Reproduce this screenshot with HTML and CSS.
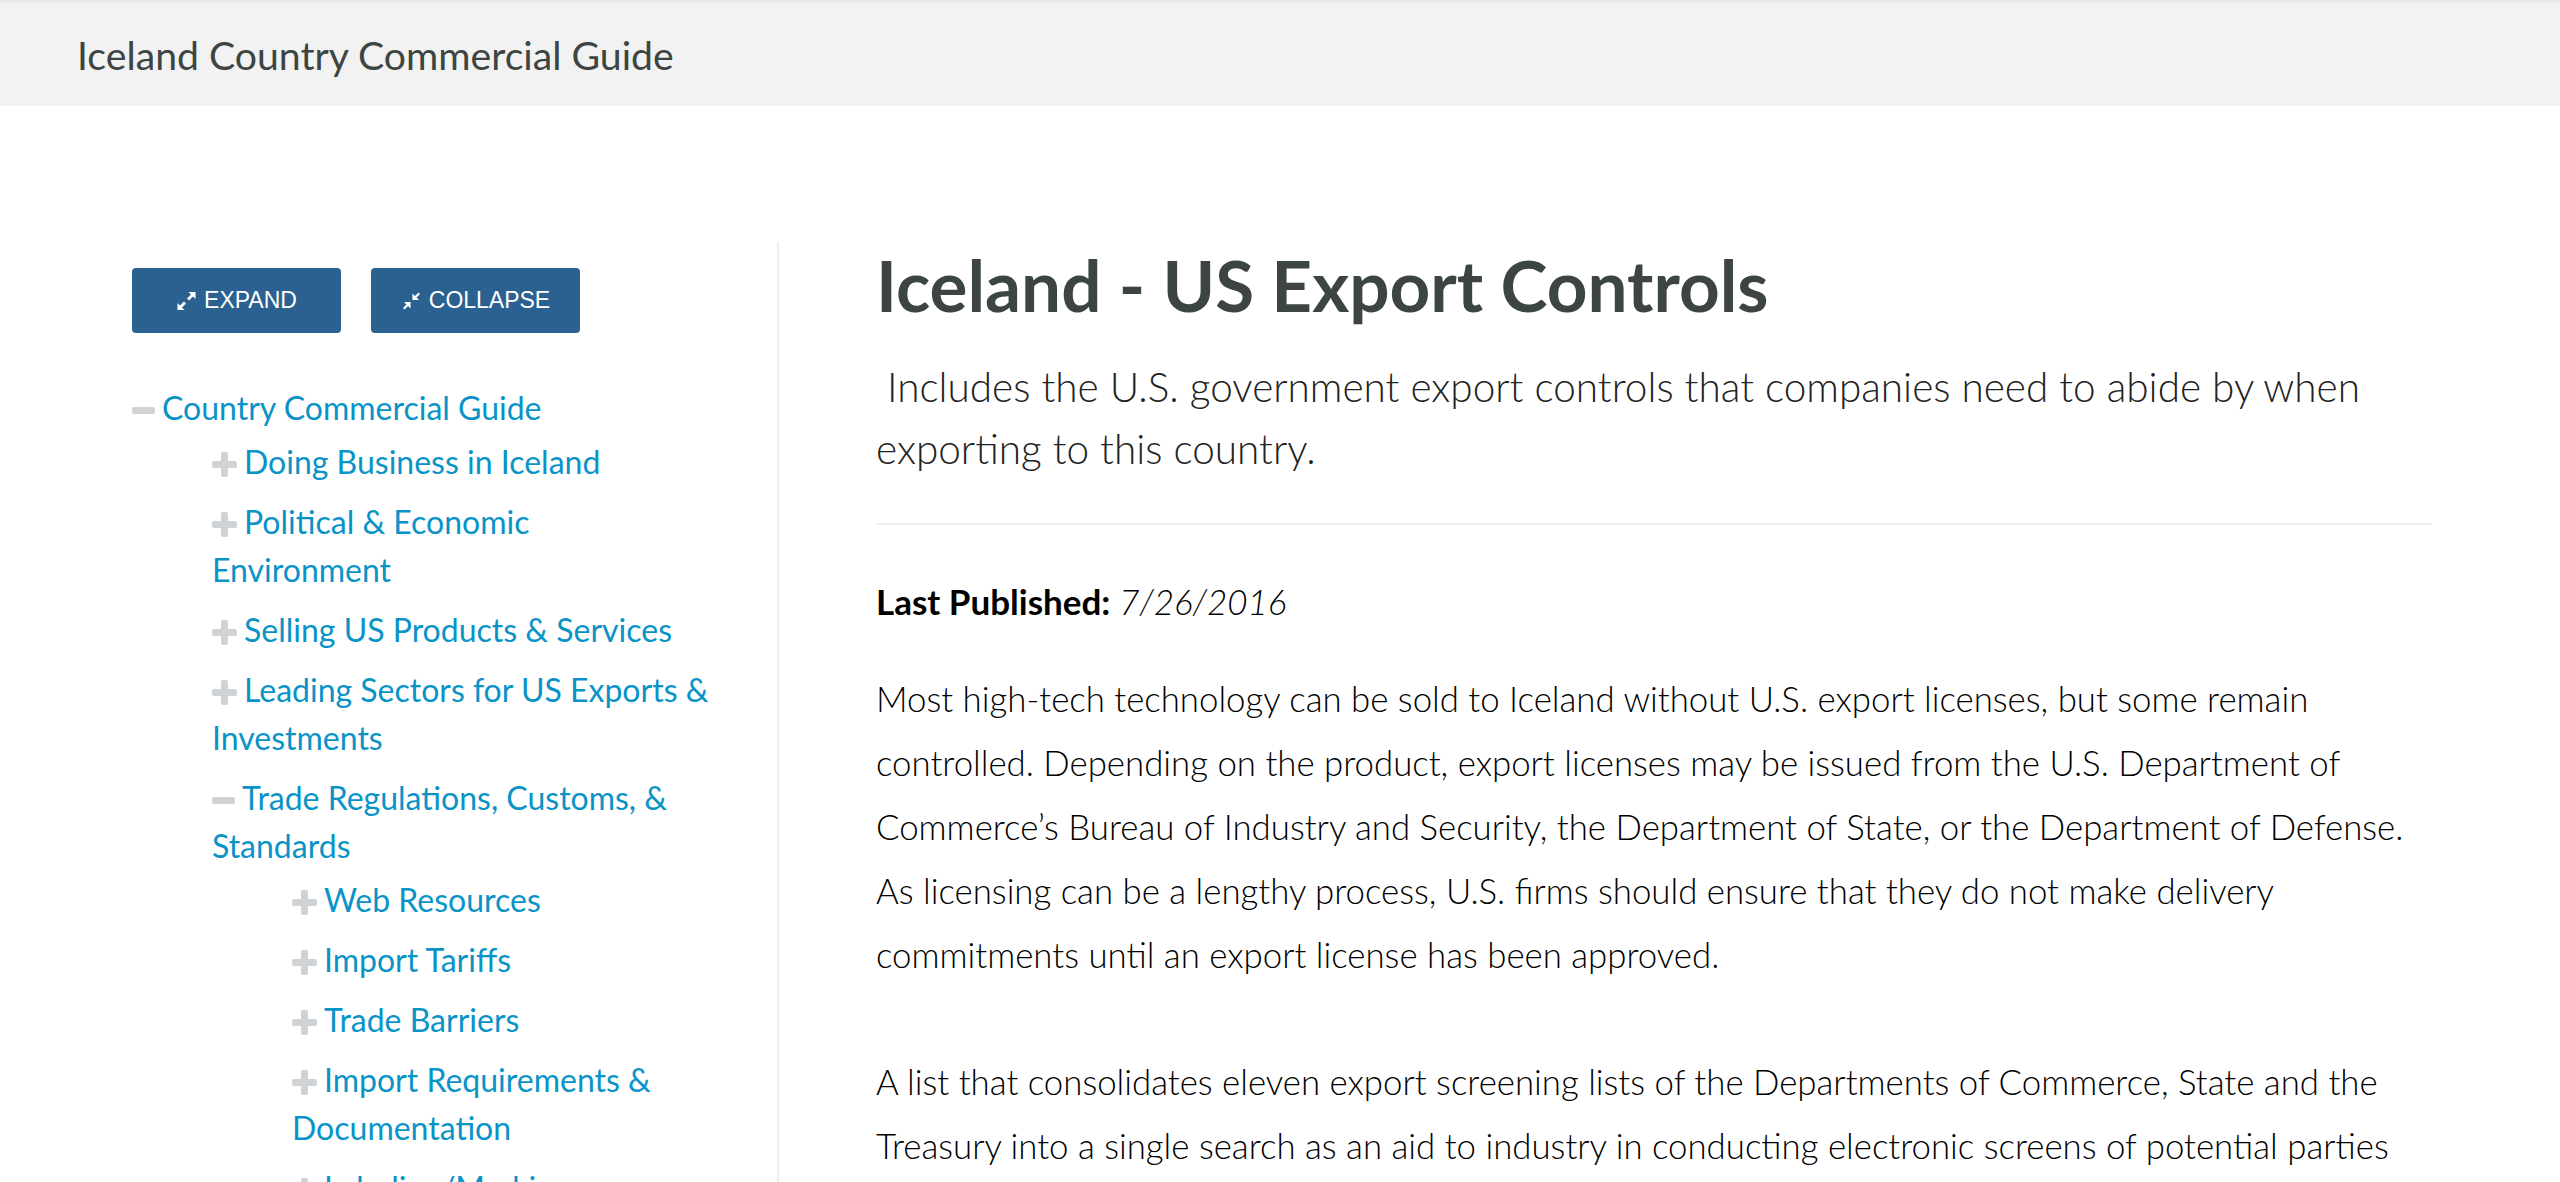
FILE: index.html
```html
<!DOCTYPE html>
<html lang="en">
<head>
<meta charset="utf-8">
<title>Iceland - US Export Controls</title>
<link rel="stylesheet" href="styles.css">
</head>
<body>
<header class="topbar">
  <div class="topbar-title">Iceland Country Commercial Guide</div>
</header>
<div class="page">
  <aside class="sidebar">
    <div class="btn-row">
      <button class="btn" type="button">
        <svg class="btn-icon" viewBox="0 0 20 20" width="21" height="20"><polygon fill="#fff" points="1,19 1,12 3.5,14.5 7.5,10.5 9.5,12.5 5.5,16.5 8,19"/><polygon fill="#fff" points="19,1 19,8 16.5,5.5 12.5,9.5 10.5,7.5 14.5,3.5 12,1"/></svg>
        <span>EXPAND</span>
      </button>
      <button class="btn" type="button">
        <svg class="btn-icon" viewBox="0 0 20 20" width="21" height="20"><polygon fill="#fff" points="11,9 11,2.5 13.5,5 17,1.5 18.5,3 15,6.5 17.5,9"/><polygon fill="#fff" points="9,11 9,17.5 6.5,15 3,18.5 1.5,17 5,13.5 2.5,11"/></svg>
        <span>COLLAPSE</span>
      </button>
    </div>
    <ul class="tree">
      <li><span class="ic-minus"></span><a href="#">Country Commercial Guide</a>
        <ul>
          <li><span class="ic-plus"></span><a href="#">Doing Business in Iceland</a></li>
          <li><span class="ic-plus"></span><a href="#">Political &amp; Economic Environment</a></li>
          <li><span class="ic-plus"></span><a href="#">Selling US Products &amp; Services</a></li>
          <li><span class="ic-plus"></span><a href="#">Leading Sectors for US Exports &amp; Investments</a></li>
          <li><span class="ic-minus"></span><a href="#">Trade Regulations, Customs, &amp; Standards</a>
            <ul>
              <li><span class="ic-plus"></span><a href="#">Web Resources</a></li>
              <li><span class="ic-plus"></span><a href="#">Import Tariffs</a></li>
              <li><span class="ic-plus"></span><a href="#">Trade Barriers</a></li>
              <li><span class="ic-plus"></span><a href="#">Import Requirements &amp; Documentation</a></li>
              <li><span class="ic-plus"></span><a href="#">Labeling/Marking Requirements</a></li>
              <li><span class="ic-plus"></span><a href="#">U.S. Export Controls</a></li>
            </ul>
          </li>
        </ul>
      </li>
    </ul>
  </aside>
  <main class="content">
    <h1 class="title">Iceland - US Export Controls</h1>
    <p class="subtitle">&nbsp;Includes the U.S. government export controls that companies need to abide by when exporting to this country.</p>
    <hr class="rule">
    <p class="published"><strong>Last Published:</strong> <em>7/26/2016</em></p>
    <p class="body">Most high-tech technology can be sold to Iceland without U.S. export licenses, but some remain controlled. Depending on the product, export licenses may be issued from the U.S. Department of Commerce’s Bureau of Industry and Security, the Department of State, or the Department of Defense. As licensing can be a lengthy process, U.S. firms should ensure that they do not make delivery commitments until an export license has been approved.</p>
    <p class="body body-gap">A list that consolidates eleven export screening lists of the Departments of Commerce, State and the Treasury into a single search as an aid to industry in conducting electronic screens of potential parties to regulated transactions.</p>
  </main>
</div>
</body>
</html>
```

FILE: styles.css
```css
html, body {
  margin: 0;
  padding: 0;
  background: #fff;
}
body {
  font-family: Lato, "Open Sans", "Liberation Sans", sans-serif;
  color: #111;
}
.topbar {
  border-top: 3px solid #e8ebee;
  background: #f1f2f1;
  height: 103px;
  display: flex;
  align-items: center;
  padding-left: 77px;
}
.topbar-title {
  font-size: 39.2px;
  color: #3d4543;
  font-weight: 400;
}
.page {
  display: flex;
  align-items: flex-start;
  margin-top: 136px;
  padding-left: 132px;
}
.sidebar {
  width: 580px;
  padding-top: 26px;
  padding-right: 65px;
  border-right: 2px solid #eeeeee;
  min-height: 1000px;
  flex: none;
}
.btn-row {
  display: flex;
  gap: 30px;
}
.btn {
  width: 209px;
  height: 65px;
  background: #2b6190;
  border: 0;
  border-radius: 4px;
  color: #fff;
  font-family: "Liberation Sans", Arial, sans-serif;
  font-size: 23px;
  display: flex;
  align-items: center;
  justify-content: center;
  gap: 7px;
  padding: 0;
}
.btn-icon {
  display: block;
}
.tree, .tree ul {
  list-style: none;
  margin: 0;
  padding: 0;
}
.tree {
  margin-top: 45px;
}
.tree ul {
  padding-left: 80px;
}
.tree li {
  padding: 6px 0;
  font-size: 32px;
  line-height: 48px;
}
.tree li:last-child {
  padding-bottom: 0;
}
.tree a {
  color: #0a93c7;
  text-decoration: none;
}
.ic-plus, .ic-minus {
  display: inline-block;
  position: relative;
  width: 25px;
  height: 25px;
  margin-right: 7px;
  vertical-align: -3px;
}
.ic-minus {
  width: 23px;
}
.ic-plus::before, .ic-minus::before {
  content: "";
  position: absolute;
  left: 0;
  right: 0;
  top: 9px;
  height: 7px;
  background: #d0d3d6;
  border-radius: 2px;
}
.ic-plus::after {
  content: "";
  position: absolute;
  top: 0;
  bottom: 0;
  left: 9px;
  width: 7px;
  background: #d0d3d6;
  border-radius: 2px;
}
.content {
  margin-left: 97px;
  width: 1556px;
  flex: none;
}
.title {
  margin: 0;
  font-size: 71px;
  font-weight: 700;
  line-height: normal;
  color: #3c4542;
}
.subtitle {
  margin: 29px 0 0;
  font-family: "Lato Light", Lato, sans-serif;
  font-size: 40.5px;
  font-weight: 300;
  line-height: 62px;
  color: #222;
}
.rule {
  margin: 43px 0 0;
  border: 0;
  border-top: 2px solid #eeeeee;
  height: 0;
}
.published {
  margin: 44px 0 0;
  font-size: 35px;
  line-height: 64px;
  color: #000;
}
.published strong {
  font-weight: 700;
}
.published em {
  font-family: "Lato Light", Lato, sans-serif;
  font-weight: 300;
}
.body {
  margin: 34px 0 0;
  width: 1540px;
  font-family: "Lato Light", Lato, sans-serif;
  font-size: 34.8px;
  font-weight: 300;
  line-height: 64px;
  color: #000;
}
.body-gap {
  margin-top: 63px;
}
```
